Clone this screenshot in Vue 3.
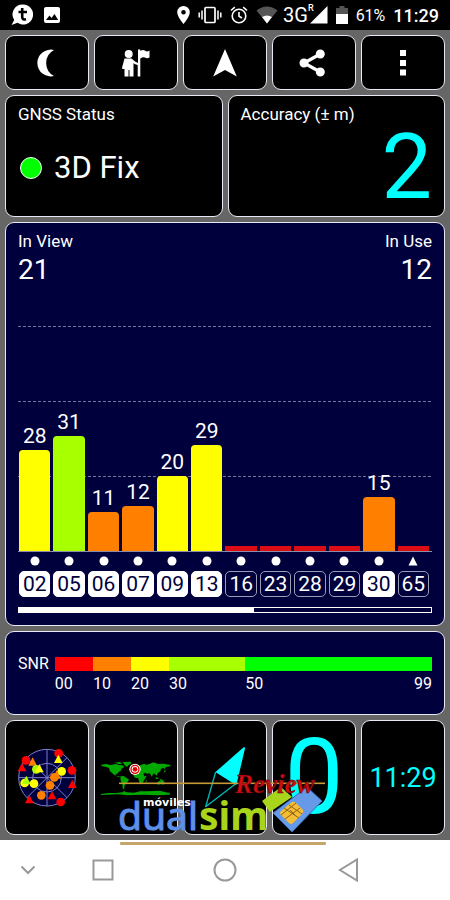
<template>
  <div class="screen">
    <header class="status-bar">
      <div class="status-group">
        <svg width="22" height="22" viewBox="0 0 22 22">
          <path d="M12 0.500A10 10 0 1 1 6.500 18.800L0.500 21L3.200 16A10 10 0 0 1 12 0.500Z" fill="#fff" />
          <path d="M7.500 8H16M11.200 4V13Q11.200 16 15 15.300" fill="none" stroke="#000" stroke-width="2.600" />
        </svg>
        <svg width="16" height="16" viewBox="0 0 16 16">
          <rect width="16" height="16" rx="2" fill="#fff" />
          <path d="M2 13L5.500 8.500L7.500 11L10.500 7L14.200 13Z" fill="#000" />
        </svg>
      </div>
      <div class="status-group status-right">
        <svg width="13" height="18" viewBox="0 0 13 18">
          <path d="M6.500 0A6.300 6.300 0 0 0 0.200 6.300C0.200 11 6.500 18 6.500 18S12.800 11 12.800 6.300A6.300 6.300 0 0 0 6.500 0ZM6.500 4A2.300 2.300 0 1 1 6.500 8.600A2.300 2.300 0 0 1 6.500 4Z" fill="#fff" />
        </svg>
        <svg width="24" height="18" viewBox="0 0 24 18">
          <rect x="7" y="1.500" width="10" height="15" rx="1" fill="none" stroke="#fff" stroke-width="1.700" />
          <path d="M1.200 6.500V11.500M4 4.500V13.500M20 4.500V13.500M22.800 6.500V11.500" stroke="#fff" stroke-width="1.500" />
        </svg>
        <svg width="18" height="18" viewBox="0 0 18 18">
          <circle cx="9" cy="10" r="6.800" fill="none" stroke="#fff" stroke-width="1.600" />
          <path d="M9 6V10.300L12 12M1 4.500L4.800 1.200M17 4.500L13.200 1.200" fill="none" stroke="#fff" stroke-width="1.600" />
        </svg>
        <svg width="22" height="18" viewBox="0 0 22 18">
          <path d="M0.500 4.500Q11 -3.500 21.500 4.500L11 17.500Z" fill="#555" />
          <path d="M6 11Q11 8 16 11L11 17.500Z" fill="#fff" />
        </svg>
        <span class="network">3G<sup>R</sup>
          <svg width="18" height="18" viewBox="0 0 18 18"><path d="M17.500 0V17.500H0Z" fill="#fff" /></svg>
        </span>
        <svg width="12" height="18" viewBox="0 0 12 18">
          <path d="M3.500 0H8.500V2H12V8H0V2H3.500Z" fill="#555" />
          <rect y="8" width="12" height="10" fill="#fff" />
        </svg>
        <span class="battery">61%</span>
        <span class="time">11:29</span>
      </div>
    </header>

    <main class="dashboard">
      <div class="toolbar">
        <button v-for="tool in tools" :key="tool.name" class="panel tool" type="button" :aria-label="tool.name">
          <svg width="30" height="30" viewBox="0 0 30 30">
            <path :d="tool.path" fill="#fff" />
            <path v-if="tool.stroke" :d="tool.stroke" fill="none" stroke="#fff" stroke-width="3.200" />
          </svg>
        </button>
      </div>

      <div class="summary">
        <section class="panel card">
          <h2>GNSS Status</h2>
          <p class="fix"><span class="led"></span>3D Fix</p>
        </section>
        <section class="panel card">
          <h2>Accuracy (± m)</h2>
          <p class="accuracy">2</p>
        </section>
      </div>

      <section class="panel card navy satellites">
        <div class="counts">
          <div>
            <h2>In View</h2>
            <p>21</p>
          </div>
          <div class="in-use">
            <h2>In Use</h2>
            <p>12</p>
          </div>
        </div>
        <div class="plot">
          <div v-for="sat in satellites" :key="sat.id" class="bar-slot">
            <span v-if="sat.snr" class="snr">{{ sat.snr }}</span>
            <div class="bar" :class="sat.level" :style="{ height: sat.height + 'px' }"></div>
          </div>
        </div>
        <div class="ids">
          <div v-for="sat in satellites" :key="sat.id" class="id-slot">
            <svg width="10" height="10" viewBox="0 0 10 10">
              <path v-if="sat.glonass" d="M5 0.500L9.500 9.500H0.500Z" fill="#fff" />
              <circle v-else cx="5" cy="5" r="4.500" fill="#fff" />
            </svg>
            <span class="chip" :class="{ used: sat.snr }">{{ sat.id }}</span>
          </div>
        </div>
        <div class="pager"><div class="pager-fill" :style="{ width: (12 / 21) * 100 + '%' }"></div></div>
      </section>

      <section class="panel card navy legend">
        <span class="legend-title">SNR</span>
        <div class="scale">
          <div v-for="step in scale" :key="step.from" class="step" :style="{ flexGrow: step.span }">
            <div class="swatch" :class="step.level"></div>
            <div class="ticks"><span>{{ step.from }}</span><span v-if="step.to">{{ step.to }}</span></div>
          </div>
        </div>
      </section>

      <div class="tiles">
        <button class="panel tile" type="button" aria-label="Sky view">
          <svg width="62" height="62" viewBox="48 96 186 186">
            <g fill="#00003c" stroke="#7d7dd0" stroke-width="3">
              <circle cx="141" cy="188" r="85" />
              <circle cx="141" cy="188" r="43" fill="none" />
              <path d="M141 103V273M56 188H226M81 128L201 248M201 128L81 248" />
            </g>
            <template v-for="(s, i) in sky" :key="i">
              <path v-if="s[3]" :d="`M${s[0]} ${s[1] - 13}l13 25h-26z`" :fill="s[2]" />
              <circle v-else :cx="s[0]" :cy="s[1]" r="13" :fill="s[2]" />
            </template>
          </svg>
        </button>
        <button class="panel tile" type="button" aria-label="World map">
          <svg width="70" height="36" viewBox="33 135 210 108">
            <g fill="#00a800">
              <path d="M34 149L48 147L62 150L78 147L88 150L98 151L103 156L96 160L92 167L85 172L80 178L76 177L78 183L86 183L91 187L84 185L74 181L66 174L59 167L57 159L48 156L34 153Z" />
              <path d="M73 143L88 141L97 145L90 148ZM98 141L122 140L124 146L117 149L111 156L104 151Z" />
              <path d="M91 184L101 183L109 188L117 194L111 203L104 211L102 222L98 221L97 205L92 198Z" />
              <path d="M143 164L145 156L153 149L164 146L168 150L178 147L190 142L205 147L221 146L242 150L241 154L228 156L224 162L219 158L213 162L211 169L203 174L201 182L195 178L190 174L186 185L179 175L172 176L166 173L160 176L163 184L170 182L164 193L157 205L151 208L147 199L145 190L135 188L130 181L134 173L143 170L137 167Z" />
              <path d="M202 202L211 196L219 195L224 203L220 209L213 207L203 209ZM195 188L202 187L206 192L199 192ZM207 190L218 194L212 195ZM167 197L171 195L168 204ZM224 165L228 169L221 173Z" />
              <path d="M33 237L55 234L76 234L98 232L102 228L109 232L132 233L150 229L170 229L190 228L208 227L228 232L240 234L239 239L201 241L160 239L112 241L86 238L33 240Z" />
            </g>
            <circle cx="135" cy="163" r="17" fill="#fff" />
            <circle cx="135" cy="163" r="12" fill="none" stroke="#e00000" stroke-width="4" />
            <circle cx="135" cy="163" r="7" fill="#e00000" />
          </svg>
        </button>
        <button class="panel tile" type="button" aria-label="Compass">
          <svg width="50" height="66" viewBox="330 90 150 198">
            <path d="M462 100L381 171L437 206Z" fill="#0ff" stroke="#0ff" stroke-width="6" stroke-linejoin="round" />
            <path d="M377 171L347 275L437 206" fill="none" stroke="#0bb" stroke-width="4" stroke-linejoin="round" />
          </svg>
        </button>
        <button class="panel tile speed" type="button">0</button>
        <button class="panel tile clock" type="button">11:29</button>
        <svg class="watermark" width="210" height="78" viewBox="118 770 210 78">
          <rect x="119" y="782.500" width="206" height="1.600" fill="#c79a35" />
          <rect x="120" y="842" width="206" height="3" rx="1" fill="#c4a66c" />
          <text x="118" y="830" class="brand blue">dual</text>
          <text x="199" y="830" class="brand lime">sim</text>
          <text x="143" y="806" class="brand-top">móviles</text>
          <path d="M262 801L281 787L292 797L270 812Z" fill="#a9d41c" />
          <path d="M273 813L307 787L322 801L292 832Z" fill="#6699e8" stroke="#3869b5" stroke-width="1" />
          <path d="M281 811L292 802Q294 801 296 803L303 810Q304 812 302 814L293 823Q291 825 289 823L281 815Q279 813 281 811Z" fill="#f5bd35" />
          <path d="M284 808L299 818M289 805L302 814M281 815L296 803M285 819L300 808M290 810L295 815" fill="none" stroke="#8a6414" stroke-width="1" />
          <text x="235" y="793" class="review">Review</text>
        </svg>
      </div>
    </main>

    <nav class="nav-bar">
      <button class="nav-hide" type="button" aria-label="Hide">
        <svg width="16" height="10" viewBox="0 0 16 10"><path d="M1.500 1.500L8 8L14.500 1.500" /></svg>
      </button>
      <button type="button" aria-label="Recents">
        <svg width="24" height="24" viewBox="0 0 24 24"><rect x="2.500" y="2.500" width="19" height="19" /></svg>
      </button>
      <button type="button" aria-label="Home">
        <svg width="24" height="24" viewBox="0 0 24 24"><circle cx="12" cy="12" r="10.500" /></svg>
      </button>
      <button type="button" aria-label="Back">
        <svg width="24" height="24" viewBox="0 0 24 24"><path d="M22 1.500V22.500L5 12Z" /></svg>
      </button>
    </nav>
  </div>
</template>

<script setup>
const tools = [
  { name: 'Night mode', path: 'M22 2A13.400 13.400 0 1 0 22 28A14.700 14.700 0 0 1 22 2Z' },
  {
    name: 'Guide',
    path: 'M7.700 2A4 4 0 1 1 7.700 10A4 4 0 0 1 7.700 2ZM3.500 10.500H10.500L14 13.500L17 15V1.500H19.300V3Q22 1 24.500 3Q26 4 28.500 2.500V9.500Q26 11 24 9.500Q22 8.500 19.300 10.500V28.500H16.700V17L13.500 16L12.500 15V28.500H8.500V22H7.500V28.500H3.500V21H1.200V19Z',
  },
  { name: 'Navigate', path: 'M15 1L26.800 28.500L15 22L3.200 28.500Z' },
  {
    name: 'Share',
    path: 'M21.300 1.500A4.500 4.500 0 1 1 21.300 10.500A4.500 4.500 0 0 1 21.300 1.500ZM5 10.500A4.500 4.500 0 1 1 5 19.500A4.500 4.500 0 0 1 5 10.500ZM21.300 19.500A4.500 4.500 0 1 1 21.300 28.500A4.500 4.500 0 0 1 21.300 19.500Z',
    stroke: 'M21.300 6L5 15L21.300 24',
  },
  { name: 'More', path: 'M12 2H18V8H12ZM12 12H18V18H12ZM12 21.500H18V27.500H12Z' },
];

const satellites = [
  { id: '02', snr: 28, height: 101, level: 'yellow' },
  { id: '05', snr: 31, height: 115, level: 'lime' },
  { id: '06', snr: 11, height: 39, level: 'orange' },
  { id: '07', snr: 12, height: 45, level: 'orange' },
  { id: '09', snr: 20, height: 75, level: 'yellow' },
  { id: '13', snr: 29, height: 106, level: 'yellow' },
  { id: '16', height: 5, level: 'none' },
  { id: '23', height: 5, level: 'none' },
  { id: '28', height: 5, level: 'none' },
  { id: '29', height: 5, level: 'none' },
  { id: '30', snr: 15, height: 54, level: 'orange' },
  { id: '65', height: 5, level: 'none', glonass: true },
];

const scale = [
  { from: '00', span: 10, level: 'red' },
  { from: '10', span: 10, level: 'orange' },
  { from: '20', span: 10, level: 'yellow' },
  { from: '30', span: 20, level: 'lime' },
  { from: '50', to: '99', span: 49, level: 'green' },
];

// x, y, colour, triangle
const sky = [
  [176, 115, '#f00', false],
  [78, 136, '#f00', false],
  [216, 166, '#f00', false],
  [182, 261, '#f00', false],
  [66, 157, '#f00', true],
  [217, 207, '#f00', true],
  [88, 253, '#f00', true],
  [156, 241, '#f00', true],
  [98, 140, '#ff8000', true],
  [175, 132, '#ff0', true],
  [109, 163, '#a8ff00', false],
  [118, 160, '#ff0', true],
  [74, 204, '#ff0', false],
  [79, 195, '#a8ff00', true],
  [102, 206, '#ff0', false],
  [185, 169, '#ff0', false],
  [163, 187, '#ff8000', false],
  [170, 179, '#ff8000', true],
  [150, 211, '#ff8000', false],
  [124, 241, '#ff8000', false],
];
</script>

<style>
body {
  margin: 0;
  background: #fff;
}
</style>

<style scoped>
.screen {
  color: #fff;
  font-family: Roboto, "Liberation Sans", sans-serif;
}

svg {
  display: block;
  flex: none;
}

h2,
p {
  margin: 0;
  font-weight: 400;
}

button {
  padding: 0;
  border: 0;
  background: none;
  font-family: inherit;
}

.status-bar {
  display: flex;
  justify-content: space-between;
  height: 30px;
  padding: 0 11px;
  background: #000;
}

.status-group {
  display: flex;
  align-items: center;
  gap: 11px;
}

.status-right {
  gap: 8px;
}

.network {
  display: flex;
  align-items: center;
  margin-left: -3px;
  font-size: 20px;
}

.network sup {
  align-self: flex-start;
  margin-right: -4px;
  font-size: 9px;
  font-weight: 500;
  line-height: 10px;
}

.battery {
  font-size: 16px;
}

.time {
  font-size: 18px;
  font-weight: 500;
}

.dashboard {
  display: flex;
  flex-direction: column;
  gap: 5px;
  padding: 5px;
  background: #666;
}

.panel {
  box-sizing: border-box;
  border: 1px solid #e8e8f4;
  border-radius: 9px;
  background: #000;
}

.card {
  padding: 8px 12px;
}

.card h2 {
  font-size: 17px;
  line-height: 20px;
}

.navy {
  background: #00003c;
}

.toolbar,
.tiles {
  display: grid;
  grid-template-columns: repeat(5, 1fr);
  gap: 5px;
}

.tool {
  display: flex;
  align-items: center;
  justify-content: center;
  height: 55px;
}

.summary {
  display: grid;
  grid-template-columns: 1fr 1fr;
  gap: 5px;
}

.summary .card {
  height: 122px;
}

.fix {
  display: flex;
  align-items: center;
  gap: 12px;
  margin-top: 24px;
  padding-left: 2px;
  font-size: 31px;
  line-height: 40px;
}

.led {
  box-sizing: border-box;
  width: 22px;
  height: 22px;
  border: 1px solid #fff;
  border-radius: 50%;
  background: #0f0;
}

.accuracy {
  margin-top: 10px;
  color: #0ff;
  font-size: 90px;
  line-height: 68px;
  text-align: right;
}

.counts {
  display: flex;
  justify-content: space-between;
}

.counts p {
  font-size: 28px;
  line-height: 38px;
}

.in-use {
  text-align: right;
}

.plot {
  display: grid;
  grid-template-columns: repeat(12, 1fr);
  gap: 3px;
  height: 225px;
  margin-top: 37px;
  padding: 0 3px 0 1px;
  border-bottom: 1px solid #8c8ca8;
  background: repeating-linear-gradient(to right, transparent 0 3px, #00003c 3px 5px),
    repeating-linear-gradient(to bottom, #74749c 0 1px, transparent 1px 75px);
}

.bar-slot {
  display: flex;
  flex-direction: column;
  justify-content: flex-end;
  align-items: center;
}

.snr {
  font-size: 21px;
  line-height: 28px;
}

.bar {
  width: 100%;
  border-radius: 4px 4px 0 0;
}

.red {
  background: #f00;
}

.orange {
  background: #ff8000;
}

.yellow {
  background: #ff0;
}

.swatch.lime,
.bar.lime {
  background: #a8ff00;
}

.green {
  background: #0f0;
}

.none {
  border-radius: 0;
  background: #dc0c14;
}

.ids {
  display: grid;
  grid-template-columns: repeat(12, 1fr);
  gap: 3px;
  margin-top: 4px;
  padding: 0 3px 0 1px;
}

.id-slot {
  display: flex;
  flex-direction: column;
  align-items: center;
  gap: 5px;
}

.chip {
  box-sizing: border-box;
  width: 100%;
  border: 1px solid #9c9cb4;
  border-radius: 5px;
  font-size: 21px;
  line-height: 24px;
  text-align: center;
}

.used {
  border-color: #fff;
  background: #fff;
  color: #00003c;
}

.pager {
  height: 4px;
  margin: 10px 0 4px;
  border: 1px solid #fff;
}

.pager-fill {
  height: 100%;
  background: #fff;
}

.legend {
  display: flex;
  gap: 6px;
  height: 84px;
  padding-top: 25px;
  font-size: 16px;
}

.legend-title {
  line-height: 14px;
}

.scale {
  display: flex;
  flex: 1;
}

.step {
  flex-basis: 0;
  min-width: 0;
}

.swatch {
  height: 14px;
}

.ticks {
  display: flex;
  justify-content: space-between;
  line-height: 26px;
}

.tiles {
  position: relative;
}

.tile {
  display: flex;
  align-items: center;
  justify-content: center;
  height: 115px;
  color: #0ff;
}

.speed {
  font-size: 105px;
  line-height: 112px;
}

.clock {
  font-size: 27px;
}

.watermark {
  position: absolute;
  top: 50px;
  left: 50%;
  margin-left: -107px;
  pointer-events: none;
}

.brand {
  font-family: "Noto Sans", "Open Sans", sans-serif;
  font-size: 39px;
}

.brand.blue {
  fill: #5b8fe8;
  stroke: #5b8fe8;
  stroke-width: 1px;
}

.brand.lime {
  fill: #a9d41c;
  font-weight: 700;
}

.brand-top {
  fill: #fff;
  font-family: "DejaVu Sans", sans-serif;
  font-size: 11px;
  font-weight: 700;
}

.review {
  fill: #d00c14;
  stroke: #400;
  stroke-width: 0.5px;
  font-family: "Liberation Serif", serif;
  font-size: 27px;
  font-style: italic;
  font-weight: 700;
}

.nav-bar {
  display: flex;
  height: 60px;
  padding: 0 42px 0 14px;
  background: #fff;
}

.nav-bar button {
  display: flex;
  flex: 1;
  align-items: center;
  justify-content: center;
}

.nav-bar .nav-hide {
  flex: none;
  width: 28px;
}

.nav-bar svg {
  fill: none;
  stroke: #999;
  stroke-width: 2px;
}
</style>
